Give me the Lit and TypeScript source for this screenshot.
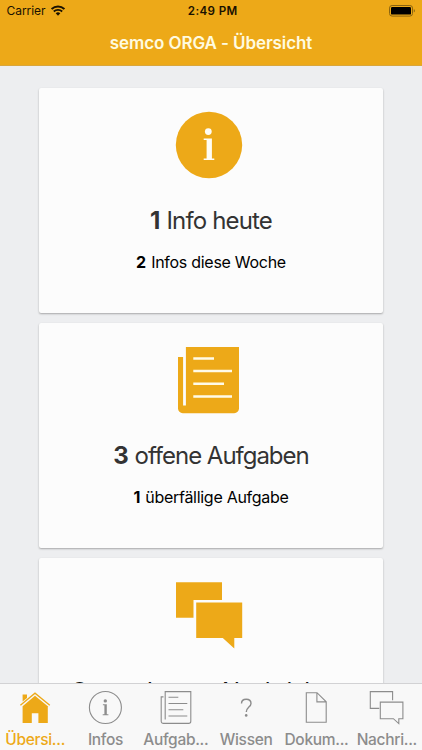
import { LitElement, html, css, svg } from "lit";
import { customElement } from "lit/decorators.js";
import { classMap } from "lit/directives/class-map.js";

const wifi = html`<svg class="wifi" width="14" height="11" viewBox="0 0 14 11">
  <path d="M0.6 4.1A9.2 9.2 0 0 1 13.4 4.1" fill="none" stroke="#1a1100" stroke-width="2" />
  <path d="M2.8 6.5A6 6 0 0 1 11.2 6.5" fill="none" stroke="#1a1100" stroke-width="1.8" />
  <path d="M4.7 8.3A3.3 3.3 0 0 1 9.3 8.3L7 10.8Z" fill="#1a1100" />
</svg>`;

const battery = html`<svg class="battery" width="27" height="12" viewBox="0 0 27 12">
  <rect x="0.5" y="0.5" width="23" height="10.6" rx="2.6" fill="none" stroke="#8a6410" />
  <rect x="2" y="2" width="20" height="7.6" rx="1.2" fill="#000" />
  <path d="M24.8 4v3.6c1.5-.6 1.5-3 0-3.6z" fill="#8a6410" />
</svg>`;

const bigInfo = html`<svg width="68" height="68" viewBox="0 0 68 68">
  <circle cx="34" cy="34" r="33.2" fill="#eda918" />
  <circle cx="33.3" cy="20.6" r="3.4" fill="#fffdf5" />
  <path d="M28.7 27.4H36.9V47.6H39.3V49.1H28.7V47.6H31.6V28.9H28.7Z" fill="#fffdf5" />
</svg>`;

const bigTasks = html`<svg width="68" height="68" viewBox="1 0 68 68">
  <path d="M11.9 1H65V62.4a4.8 4.8 0 0 1-4.8 4.8H8.8A4.8 4.8 0 0 1 4 62.4V11H9.1V59.6H11.9Z" fill="#eda918" />
  <path d="M19.3 12.5H40M19.3 25H58M19.3 37.8H50M19.3 50.5H58" stroke="#fffbe8" stroke-width="2.6" />
</svg>`;

const bigChat = html`<svg width="68" height="68" viewBox="0 0 68 68">
  <path d="M1 1.2H47V19H18.5V36.8H1Z" fill="#eda918" />
  <path d="M21.2 21.4H67.2V57H59.3V67.6L47.8 57H21.2Z" fill="#eda918" />
</svg>`;

const home = svg`
  <path d="M2.4 15.3L17 3.2 31.8 15.3" fill="none" stroke="#eda918" stroke-width="1.3" />
  <path d="M17 5.8L30.4 16.8H29.8V33H20.4V23.3H13.8V33H4.6V16.2Z" fill="#eda918" />
  <path d="M4.6 4.4H9V7.9L4.6 11.5Z" fill="#eda918" />`;
const info = svg`
  <circle cx="17.4" cy="17.5" r="16" />
  <circle cx="17.3" cy="10.9" r="1.7" fill="#8c8c8c" stroke="none" />
  <path d="M14.9 14.2H18.8V24.3H20.4V25.3H14.7V24.3H16.4V15.2H14.9Z" fill="#8c8c8c" stroke="none" />`;
const tasks = svg`
  <path d="M7.2 29.5V1.6H32.8V31.2a2.2 2.2 0 0 1-2.2 2.2H5.5A2.2 2.2 0 0 1 3.2 31.2V6.9H5.5" />
  <path d="M10.5 7.2H20.3M10.5 13.5H29.3M10.5 19.7H25.3M10.5 26H29.3" />`;
const question = svg`
  <path d="M12.5 13.6C12.5 10.9 14.3 9.2 17.2 9.2S22 10.9 22 13.4C22 16.9 17.3 17.4 17.3 21.9" stroke-width="1.4" />
  <circle cx="17.2" cy="25.4" r="1.3" fill="#8c8c8c" stroke="none" />`;
const doc = svg`
  <path d="M7.3 2.7H18L27.2 11.8V32.2H7.3ZM17.9 2.7V11.9H27.2" />`;
const chat = svg`
  <path d="M10.3 18.4H1.3V1.6H23.6V10.3" />
  <path d="M11.3 12.1H33.9V28.7H29.8V33.6L24.4 28.7H11.3Z" />`;

@customElement("app-status-bar")
class AppStatusBar extends LitElement {
  static styles = css`
    :host { display: grid; grid-template-columns: 1fr auto 1fr; height: 22px; align-items: center;
      font: 500 11.6px/22px Inter, sans-serif; color: #1a1100; padding: 0 6px 0 6.5px; }
    .left { display: flex; align-items: center; gap: 6px; }
    .carrier { font-weight: 400; font-size: 12px; letter-spacing: -0.05px; }
    .wifi { margin-top: -2px; }
    .time { font-weight: 600; font-size: 11.6px; letter-spacing: 0.4px; padding-left: 3px; }
    .right { display: flex; justify-content: flex-end; }
    .battery { margin-top: -1px; }
  `;
  render() {
    return html`<div class="left"><span class="carrier">Carrier</span>${wifi}</div>
      <span class="time">2:49 PM</span>
      <div class="right">${battery}</div>`;
  }
}

@customElement("app-card")
class AppCard extends LitElement {
  static properties = { icon: {}, count: {}, label: {}, subCount: {}, subLabel: {}, kind: {} };
  declare icon: unknown;
  declare count: string;
  declare label: string;
  declare subCount: string;
  declare subLabel: string;
  declare kind: string;
  static styles = css`
    :host { display: flex; flex-direction: column; align-items: center; flex: none; height: 225px;
      box-sizing: border-box; padding-top: 23px; background: #fcfcfc; border-radius: 2px;
      box-shadow: 0 1px 2px rgba(0, 0, 0, 0.3); font-family: Inter, sans-serif; white-space: nowrap; }
    svg { display: block; margin-right: 4px; }
    .head { margin: 25px 0 0; font-size: 24px; line-height: 34px; font-weight: 400; color: #333; letter-spacing: -0.85px; }
    .sub { margin: 11px 0 0; font-size: 16px; line-height: 26px; color: #000; letter-spacing: -0.28px; }
    b { font-weight: 700; margin-right: 1px; }
    .tasks { letter-spacing: -1.02px; }
    .chat { color: #111; letter-spacing: -0.9px; margin-top: 26px; }
  `;
  render() {
    return html`${this.icon}
      <h2 class=${classMap({ head: true, [this.kind]: true })}><b>${this.count}</b> ${this.label}</h2>
      ${this.subLabel ? html`<p class="sub"><b>${this.subCount}</b> ${this.subLabel}</p>` : ""}`;
  }
}

@customElement("app-root")
class AppRoot extends LitElement {
  static styles = css`
    :host { display: flex; flex-direction: column; height: 750px; overflow: hidden; background: #edeef0;
      font-family: Inter, sans-serif; }
    header { flex: none; height: 66px; box-sizing: border-box; background: #eda918; border-bottom: 1px solid #d9a63c; }
    h1 { margin: 0; text-align: center; font-size: 17px; line-height: 42px; font-weight: 600; color: #fffbe0; letter-spacing: -0.1px; }
    main { flex: 1; min-height: 0; overflow: hidden; display: flex; flex-direction: column; gap: 10px; padding: 22px 39px 0; }
    nav { flex: none; height: 67px; box-sizing: border-box; border-top: 1px solid #d2d2d4; background: #f8f8f8;
      display: grid; grid-template-columns: repeat(6, 1fr); }
    .tab { display: flex; flex-direction: column; align-items: center; padding-top: 6px; color: #8c8c8c;
      font-size: 15.5px; line-height: 20px; white-space: nowrap; font-weight: 450; letter-spacing: -0.3px; }
    .tab svg { display: block; fill: none; stroke: #8c8c8c; stroke-width: 1.1; }
    .tab.active { color: #eda918; }
    .tab.active svg { stroke: none; }
    .label { margin-top: 5px; }
  `;
  private tabs = [
    { label: "Übersi...", icon: home, active: true },
    { label: "Infos", icon: info },
    { label: "Aufgab...", icon: tasks },
    { label: "Wissen", icon: question },
    { label: "Dokum...", icon: doc },
    { label: "Nachri...", icon: chat },
  ];
  render() {
    return html`
      <header><app-status-bar></app-status-bar><h1>semco ORGA - Übersicht</h1></header>
      <main>
        <app-card kind="info" .icon=${bigInfo} count="1" label="Info heute" .subCount=${"2"} .subLabel=${"Infos diese Woche"}></app-card>
        <app-card kind="tasks" .icon=${bigTasks} count="3" label="offene Aufgaben" .subCount=${"1"} .subLabel=${"überfällige Aufgabe"}></app-card>
        <app-card kind="chat" .icon=${bigChat} count="0" label="ungelesene Nachrichten"></app-card>
      </main>
      <nav>
        ${this.tabs.map((t) => html`<div class=${classMap({ tab: true, active: !!t.active })}>
          <svg width="35" height="35" viewBox="0 0 35 35">${t.icon}</svg>
          <span class="label">${t.label}</span>
        </div>`)}
      </nav>`;
  }
}
